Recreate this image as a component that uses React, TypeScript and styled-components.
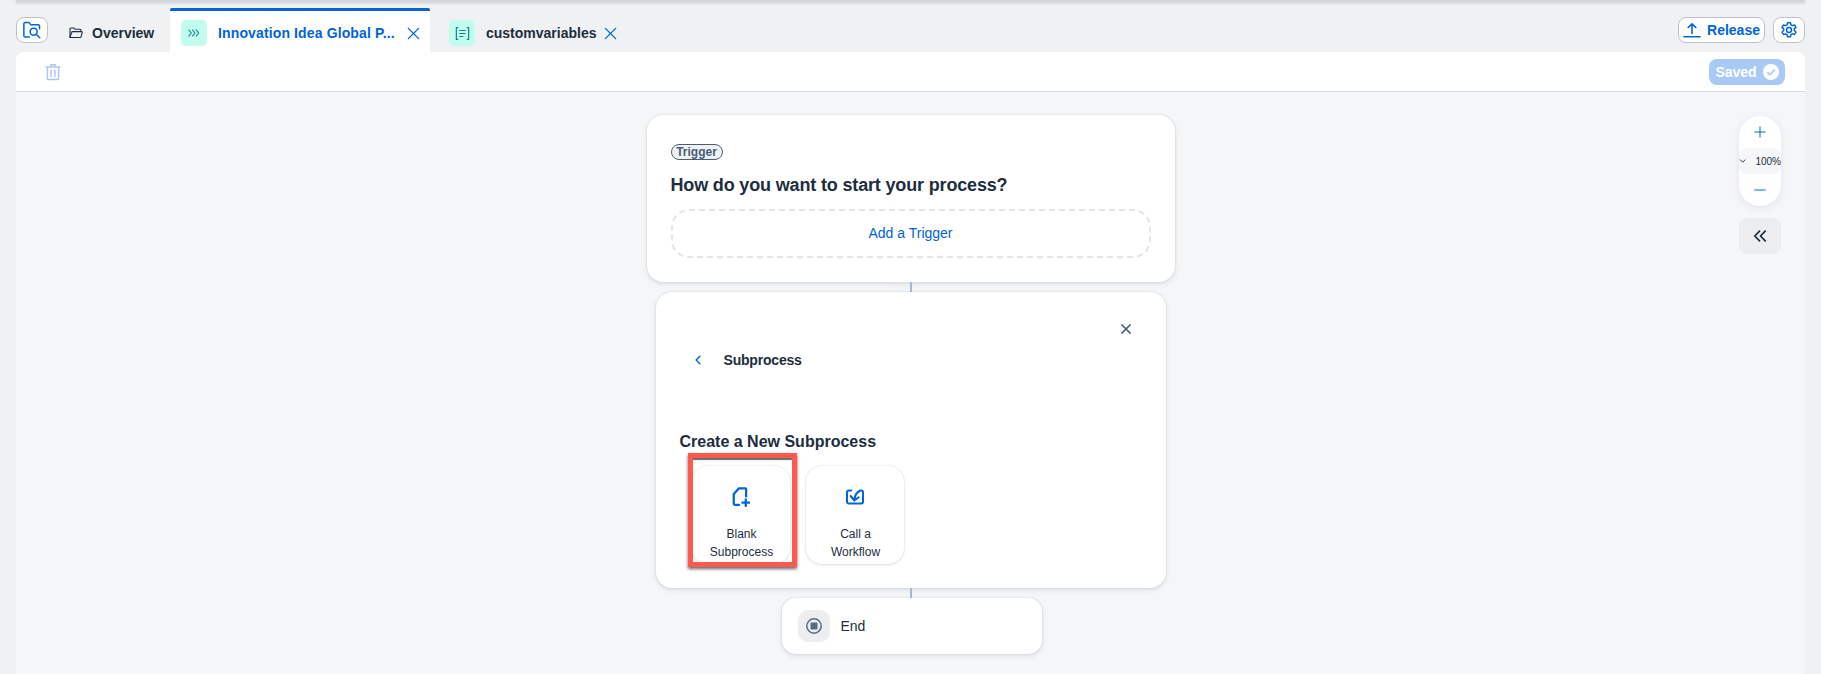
import React from "react";
import styled, { createGlobalStyle } from "styled-components";

const GlobalStyle = createGlobalStyle`
  html, body {
    margin: 0;
    height: 100%;
    overflow: hidden;
    background: #eff1f2;
    font-family: "Liberation Sans", Arial, sans-serif;
    color: #1d2d3e;
  }
`;

const Page = styled.div`
  height: 674px;
  display: flex;
  flex-direction: column;
`;

const TopEdge = styled.div`
  height: 2px;
  margin: 0 16px;
  background: #d3d6d8;
  box-shadow: 0 1px 3px rgba(60, 70, 80, 0.25);
  flex: none;
`;

const TabBar = styled.div`
  height: 50px;
  flex: none;
  display: flex;
  justify-content: space-between;
  margin: 0 16px;
`;

const Tabs = styled.div`
  display: flex;
  align-items: flex-start;
`;

const Actions = styled.div`
  display: flex;
  gap: 8px;
  padding-top: 15px;
`;

const OutlineButton = styled.button<{ $width: number }>`
  width: ${(p) => p.$width}px;
  height: 26px;
  box-sizing: border-box;
  padding: 0;
  display: flex;
  align-items: center;
  justify-content: center;
  gap: 6px;
  background: #fff;
  border: 1px solid #bcc3ca;
  border-radius: 8px;
  color: #0064d9;
  font: bold 14px "Liberation Sans", Arial, sans-serif;
`;

const SearchButton = styled(OutlineButton)`
  margin-top: 15px;
`;

const Tab = styled.div<{ $active?: boolean; $width: number; $left: number }>`
  width: ${(p) => p.$width}px;
  margin-top: 6px;
  height: 44px;
  box-sizing: border-box;
  padding: 9px 0 0 ${(p) => p.$left}px;
  display: flex;
  align-items: flex-start;
  background: ${(p) => (p.$active ? "#fff" : "transparent")};
  border-top: 3px solid ${(p) => (p.$active ? "#0064d9" : "transparent")};
  border-radius: 2px 2px 0 0;
`;

const OverviewIcon = styled.span`
  height: 26px;
  display: flex;
  align-items: center;
`;

const Tile = styled.span`
  width: 26px;
  height: 26px;
  flex: none;
  display: flex;
  align-items: center;
  justify-content: center;
  background: #c2fcee;
  border-radius: 5px;
`;

const TabTitle = styled.span<{ $active?: boolean; $left: number }>`
  margin-left: ${(p) => p.$left}px;
  line-height: 26px;
  font-size: 14px;
  font-weight: bold;
  letter-spacing: ${(p) => (p.$active ? "0.13px" : "0")};
  white-space: nowrap;
  color: ${(p) => (p.$active ? "#0064d9" : "#1d2d3e")};
`;

const TabClose = styled.span<{ $left: number }>`
  height: 26px;
  margin-left: ${(p) => p.$left}px;
  display: flex;
  align-items: center;
`;

const Panel = styled.div`
  flex: 1;
  margin: 0 16px;
  display: flex;
  flex-direction: column;
  min-height: 0;
`;

const Toolbar = styled.div`
  height: 39px;
  flex: none;
  display: flex;
  align-items: center;
  justify-content: space-between;
  padding: 0 20px 0 28px;
  background: #fff;
  border-radius: 8px 8px 0 0;
  border-bottom: 1px solid #d9dcdf;
`;

const SavedBadge = styled.div`
  width: 76px;
  height: 26px;
  display: flex;
  align-items: center;
  justify-content: center;
  gap: 6px;
  background: #a9c9f7;
  border-radius: 8px;
  color: #fff;
  font-size: 14px;
  font-weight: bold;
`;

const Canvas = styled.div`
  position: relative;
  flex: 1;
  background: #f5f6f7;
  display: flex;
  flex-direction: column;
  align-items: center;
  padding-top: 23px;
`;

const Card = styled.div`
  background: #fff;
  border-radius: 16px;
  box-shadow: 0 0 2px rgba(85, 107, 130, 0.22), 0 2px 5px rgba(85, 107, 130, 0.16);
  box-sizing: border-box;
`;

const TriggerCard = styled(Card)`
  width: 528px;
  height: 167px;
  padding: 29px 24px 0;
`;

const TriggerTag = styled.div`
  width: 52px;
  height: 16px;
  box-sizing: border-box;
  border: 1px solid #475e75;
  border-radius: 8px;
  background: #eff1f2;
  color: #475e75;
  font-size: 12px;
  font-weight: bold;
  line-height: 14px;
  text-align: center;
`;

const TriggerHeading = styled.div`
  margin-top: 13px;
  font-size: 18px;
  letter-spacing: -0.16px;
  line-height: 24px;
  font-weight: bold;
`;

const AddTrigger = styled.div`
  margin-top: 12px;
  height: 49px;
  box-sizing: border-box;
  padding-bottom: 1px;
  display: flex;
  align-items: center;
  justify-content: center;
  border: 2px dashed #e3e5e7;
  border-radius: 18px;
  color: #0064d9;
  font-size: 14px;
`;

const Connector = styled.div`
  width: 2px;
  height: 10px;
  margin-left: 1px;
  flex: none;
  background: #a9b8c8;
`;

const SubprocessCard = styled(Card)`
  width: 510px;
  height: 296px;
  padding: 29px 24px 0;
`;

const CloseRow = styled.div`
  height: 16px;
  display: flex;
  justify-content: flex-end;
  padding-right: 10px;
  align-items: center;
`;

const BackRow = styled.div`
  margin-top: 13px;
  height: 20px;
  display: flex;
  align-items: center;
  padding-left: 12px;
  gap: 20px;
  font-size: 14px;
  letter-spacing: -0.2px;
  font-weight: bold;
`;

const CreateHeading = styled.div`
  margin-top: 62px;
  font-size: 16px;
  line-height: 20px;
  font-weight: bold;
`;

const OptionRow = styled.div`
  margin-top: 14px;
  padding-left: 12px;
  display: flex;
  gap: 16px;
`;

const OptionWrap = styled.div`
  position: relative;
`;

const OptionCard = styled.div`
  width: 98px;
  height: 98px;
  box-sizing: border-box;
  padding-top: 21px;
  display: flex;
  flex-direction: column;
  align-items: center;
  background: #fff;
  border-radius: 16px;
  box-shadow: 0 0 2px rgba(85, 107, 130, 0.2), 0 1px 3px rgba(85, 107, 130, 0.16);
  font-size: 12px;
  line-height: 18px;
  text-align: center;
`;

const OptionLabel = styled.div`
  margin-top: 18px;
  padding-left: 2px;
  color: #1d2d3e;
`;

const Highlight = styled.div`
  position: absolute;
  top: -13px;
  left: -4px;
  width: 109px;
  height: 114px;
  box-sizing: border-box;
  border: 5px solid #ff5a4d;
  box-shadow: 0 2px 3px rgba(40, 40, 40, 0.7), inset 0 3px 1px -1px #6b6b6b;
  pointer-events: none;
`;

const EndCard = styled(Card)`
  width: 260px;
  height: 56px;
  margin-left: 2px;
  padding-left: 16px;
  border-radius: 14px;
  display: flex;
  align-items: center;
  gap: 11px;
  font-size: 14px;
`;

const EndTile = styled.span`
  width: 32px;
  height: 32px;
  display: flex;
  align-items: center;
  justify-content: center;
  background: #ebedef;
  border-radius: 10px;
`;

const SideControls = styled.div`
  position: absolute;
  top: 24px;
  right: 24px;
  width: 42px;
  display: flex;
  flex-direction: column;
  gap: 12px;
`;

const ZoomPill = styled.div`
  height: 90px;
  background: #fff;
  border-radius: 21px;
  display: flex;
  flex-direction: column;
  align-items: center;
  box-shadow: 0 2px 8px rgba(85, 107, 130, 0.12);
`;

const ZoomStep = styled.div`
  height: 32px;
  display: flex;
  align-items: center;
  justify-content: center;
`;

const ZoomValue = styled.div`
  width: 42px;
  height: 26px;
  flex: none;
  display: flex;
  align-items: center;
  gap: 9px;
  background: #f5f6f7;
  border-radius: 8px;
  font-size: 10px;
  white-space: nowrap;
`;

const CollapseButton = styled.div`
  height: 36px;
  display: flex;
  align-items: center;
  justify-content: center;
  background: #ebedef;
  border-radius: 8px;
`;

type IconProps = { size?: number; color?: string; width?: number };

const Line = ({ size = 16, color = "#0064d9", width = 1.5, children }: IconProps & { children: React.ReactNode }) => (
  <svg width={size} height={size} viewBox="0 0 16 16" fill="none" stroke={color} strokeWidth={width} strokeLinecap="round" strokeLinejoin="round">
    {children}
  </svg>
);

const CloseIcon = (p: IconProps) => (
  <Line {...p}>
    <path d="M2.5 2.5l11 11M13.5 2.5l-11 11" />
  </Line>
);

export default function App() {
  return (
    <Page>
      <GlobalStyle />
      <TopEdge />
      <TabBar>
        <Tabs>
          <SearchButton $width={32}>
            <Line size={20} width={1.2}>
              <path d="M6 13.5H2.5a1 1 0 0 1-1-1V3a1 1 0 0 1 1-1h3l1.5 1.7h6a1 1 0 0 1 1 1V7" />
              <circle cx="9.3" cy="9.3" r="2.8" />
              <path d="M11.4 11.4l2.8 2.8" />
            </Line>
          </SearchButton>
          <Tab $width={122} $left={20}>
            <OverviewIcon>
              <Line size={16} color="#1d2d3e" width={1.1}>
                <path d="M2 12.5V4a1 1 0 0 1 1-1h3l1.2 1.3H12a1 1 0 0 1 1 1V6.5" />
                <path d="M2 12.5l1.6-5a1.2 1.2 0 0 1 1.1-.9h8.7a.8.8 0 0 1 .8 1l-1.1 4a1.2 1.2 0 0 1-1.1.9H2z" />
              </Line>
            </OverviewIcon>
            <TabTitle $left={8}>Overview</TabTitle>
          </Tab>
          <Tab $active $width={260} $left={11}>
            <Tile>
              <Line size={14} color="#0f828f" width={1.2}>
                <path d="M2 4.5L5 8l-3 3.5M6.2 4.5l3 3.5-3 3.5M10.4 4.5l3 3.5-3 3.5" />
              </Line>
            </Tile>
            <TabTitle $active $left={11}>Innovation Idea Global P...</TabTitle>
            <TabClose $left={11}>
              <CloseIcon size={15} width={1.4} />
            </TabClose>
          </Tab>
          <Tab $width={200} $left={19}>
            <Tile>
              <Line size={17} color="#0f828f" width={1.1}>
                <path d="M3.5 2.5H2.2v11h1.3M12.5 2.5h1.3v11h-1.3M5.5 5.2h5M5.5 8h5M5.5 10.8h2.8" />
              </Line>
            </Tile>
            <TabTitle $left={11}>customvariables</TabTitle>
            <TabClose $left={6}>
              <CloseIcon size={15} width={1.4} />
            </TabClose>
          </Tab>
        </Tabs>
        <Actions>
          <OutlineButton $width={87}>
            <Line size={18} width={1.4}>
              <path d="M8 11V2.5M4.6 5.8L8 2.5l3.4 3.3M0.8 14h14.4" />
            </Line>
            Release
          </OutlineButton>
          <OutlineButton $width={32}>
            <Line size={18} width={1.3}>
              <path d="M6.7 1.5h2.6l.4 1.9 1.3.7 1.9-.6 1.3 2.2-1.5 1.3v1.5l1.5 1.3-1.3 2.2-1.9-.6-1.3.7-.4 1.9H6.7l-.4-1.9-1.3-.7-1.9.6-1.3-2.2 1.5-1.3V7l-1.5-1.3 1.3-2.2 1.9.6 1.3-.7z" />
              <circle cx="8" cy="8" r="2.2" />
            </Line>
          </OutlineButton>
        </Actions>
      </TabBar>
      <Panel>
        <Toolbar>
          <Line size={18} color="#a9c9f7" width={1.3}>
            <path d="M1.8 3.5h12.4M6 3.5V1.6h4v1.9M3 3.5v10.2a1 1 0 0 0 1 1h8a1 1 0 0 0 1-1V3.5M6.3 6.5v5.5M9.7 6.5v5.5" />
          </Line>
          <SavedBadge>
            Saved
            <svg width="16" height="16" viewBox="0 0 16 16">
              <circle cx="8" cy="8" r="8" fill="#fff" />
              <path d="M4.3 8.2l2.6 2.6 4.8-5.2" fill="none" stroke="#a9c9f7" strokeWidth="1.7" />
            </svg>
          </SavedBadge>
        </Toolbar>
        <Canvas>
          <TriggerCard>
            <TriggerTag>Trigger</TriggerTag>
            <TriggerHeading>How do you want to start your process?</TriggerHeading>
            <AddTrigger>Add a Trigger</AddTrigger>
          </TriggerCard>
          <Connector />
          <SubprocessCard>
            <CloseRow>
              <CloseIcon size={12} color="#475e75" width={1.9} />
            </CloseRow>
            <BackRow>
              <Line size={12} width={1.9}>
                <path d="M10.5 3L5.5 8l5 5" />
              </Line>
              Subprocess
            </BackRow>
            <CreateHeading>Create a New Subprocess</CreateHeading>
            <OptionRow>
              <OptionWrap>
                <OptionCard>
                  <Line size={20} width={1.8}>
                    <path d="M6.5 14.2H3a.8.8 0 0 1-.8-.8V5.6L6.4 1h5a.7.7 0 0 1 .7.7V7.5" />
                    <path d="M11.8 9.8v5.4M9.1 12.5h5.4" />
                  </Line>
                  <OptionLabel>Blank<br />Subprocess</OptionLabel>
                </OptionCard>
                <Highlight />
              </OptionWrap>
              <OptionCard>
                <Line size={20} width={1.6}>
                  <path d="M5 2.8H3a1.4 1.4 0 0 0-1.4 1.4v7.6A1.4 1.4 0 0 0 3 13.2h10a1.4 1.4 0 0 0 1.4-1.4V4.2A1.4 1.4 0 0 0 13 2.8h-.6" />
                  <path d="M11.8 3C9 4.5 7.8 7 7.5 10.5M4.5 7.2l3 3.6 3.5-2.6" />
                </Line>
                <OptionLabel>Call a<br />Workflow</OptionLabel>
              </OptionCard>
            </OptionRow>
          </SubprocessCard>
          <Connector />
          <EndCard>
            <EndTile>
              <svg width="18" height="18" viewBox="0 0 18 18">
                <circle cx="9" cy="9" r="7.2" fill="none" stroke="#556b82" strokeWidth="1.5" />
                <rect x="5.5" y="5.5" width="7" height="7" rx="1" fill="#556b82" />
              </svg>
            </EndTile>
            End
          </EndCard>
          <SideControls>
            <ZoomPill>
              <ZoomStep>
                <Line size={12} width={1.3}>
                  <path d="M8 1v14M1 8h14" />
                </Line>
              </ZoomStep>
              <ZoomValue>
                <Line size={8} color="#1d2d3e" width={2}>
                  <path d="M3 5.5l5 5 5-5" />
                </Line>
                100%
              </ZoomValue>
              <ZoomStep>
                <Line size={12} width={1.3}>
                  <path d="M1 8h14" />
                </Line>
              </ZoomStep>
            </ZoomPill>
            <CollapseButton>
              <Line size={14} color="#1d2d3e" width={2}>
                <path d="M7.5 2.5L2 8l5.5 5.5M14 2.5L8.5 8l5.5 5.5" />
              </Line>
            </CollapseButton>
          </SideControls>
        </Canvas>
      </Panel>
    </Page>
  );
}
